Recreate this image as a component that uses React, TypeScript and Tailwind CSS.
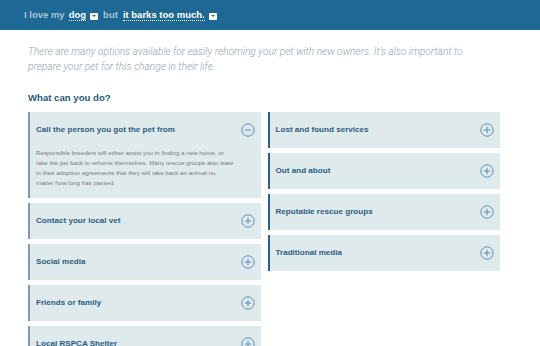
import React from "react";

// ─── Data ─────────────────────────────────────────────────────────────────────

type Item = { title: string; body?: string };

const leftItems: Item[] = [
  {
    title: "Call the person you got the pet from",
    body:
      "Responsible breeders will either assist you in finding a new home, or take the pet back to rehome themselves. Many rescue groups also state in their adoption agreements that they will take back an animal no matter how long has passed.",
  },
  { title: "Contact your local vet" },
  { title: "Social media" },
  { title: "Friends or family" },
  { title: "Local RSPCA Shelter" },
];

const rightItems: Item[] = [
  { title: "Lost and found services" },
  { title: "Out and about" },
  { title: "Reputable rescue groups" },
  { title: "Traditional media" },
];

// ─── Bits ─────────────────────────────────────────────────────────────────────

function ToggleIcon({ open }: { open: boolean }) {
  return (
    <svg width="14" height="14" viewBox="0 0 14 14" fill="none" className="shrink-0">
      <circle cx="7" cy="7" r="6.2" stroke="#4f84ad" strokeWidth="0.9" />
      <line x1="3.8" y1="7" x2="10.2" y2="7" stroke="#4f84ad" strokeWidth="0.9" />
      {!open && <line x1="7" y1="3.8" x2="7" y2="10.2" stroke="#4f84ad" strokeWidth="0.9" />}
    </svg>
  );
}

function Caret() {
  return (
    <span className="inline-flex items-center justify-center w-[8px] h-[7px] bg-white rounded-[1px] ml-[4px] mt-[2px]">
      <span className="w-0 h-0 border-l-[2px] border-r-[2px] border-t-[2.5px] border-l-transparent border-r-transparent border-t-[#1d6894]" />
    </span>
  );
}

function Card({ item, side }: { item: Item; side: "left" | "right" }) {
  const open = !!item.body;
  return (
    <div
      className={`bg-[#dfeaed] border-l-2 ${
        side === "left" ? "border-[#8099ad]" : "border-[#2a5f8a]"
      }`}
    >
      <div className="h-[36px] flex items-center justify-between pl-[6px] pr-[6px]">
        <p className="text-[8.1px] font-bold text-[#2c5d80]">{item.title}</p>
        <ToggleIcon open={open} />
      </div>
      {open && (
        <p className="pl-[6px] w-[204px] pb-[11px] text-[6.2px] leading-[9.7px] text-[#7b7b7b]">
          {item.body}
        </p>
      )}
    </div>
  );
}

// ─── Page ─────────────────────────────────────────────────────────────────────

export default function App() {
  return (
    <div className="w-[540px] h-[346px] overflow-hidden bg-white font-['Liberation_Sans',Arial,sans-serif]">
      {/* Top bar */}
      <div className="h-[30px] bg-[#1d6894] flex items-center pl-[24px] text-[9.5px] font-bold">
        <span className="text-[#a6c5d8]">I love my</span>
        <span className="ml-[4px] text-white border-b border-dotted border-white leading-[11px]">dog</span>
        <Caret />
        <span className="ml-[5px] text-[#a6c5d8]">but</span>
        <span className="ml-[5px] text-white border-b border-dotted border-white leading-[11px]">
          it barks too much.
        </span>
        <Caret />
      </div>

      <div className="pl-[28px]">
        {/* Intro */}
        <p className="mt-[15px] w-[448px] font-['Roboto',sans-serif] font-light italic text-[10.2px] leading-[14.5px] text-[#98a3a9]">
          There are many options available for easily rehoming your pet with new owners. It’s also
          important to prepare your pet for this change in their life.
        </p>

        <h2 className="mt-[17px] text-[9.6px] font-bold text-[#245a7d]">What can you do?</h2>

        {/* Accordions */}
        <div className="mt-[7px] w-[472px] grid grid-cols-2 gap-x-[7px] items-start">
          <div className="flex flex-col gap-[5px]">
            {leftItems.map((item) => (
              <Card key={item.title} item={item} side="left" />
            ))}
          </div>
          <div className="flex flex-col gap-[5px]">
            {rightItems.map((item) => (
              <Card key={item.title} item={item} side="right" />
            ))}
          </div>
        </div>
      </div>
    </div>
  );
}
